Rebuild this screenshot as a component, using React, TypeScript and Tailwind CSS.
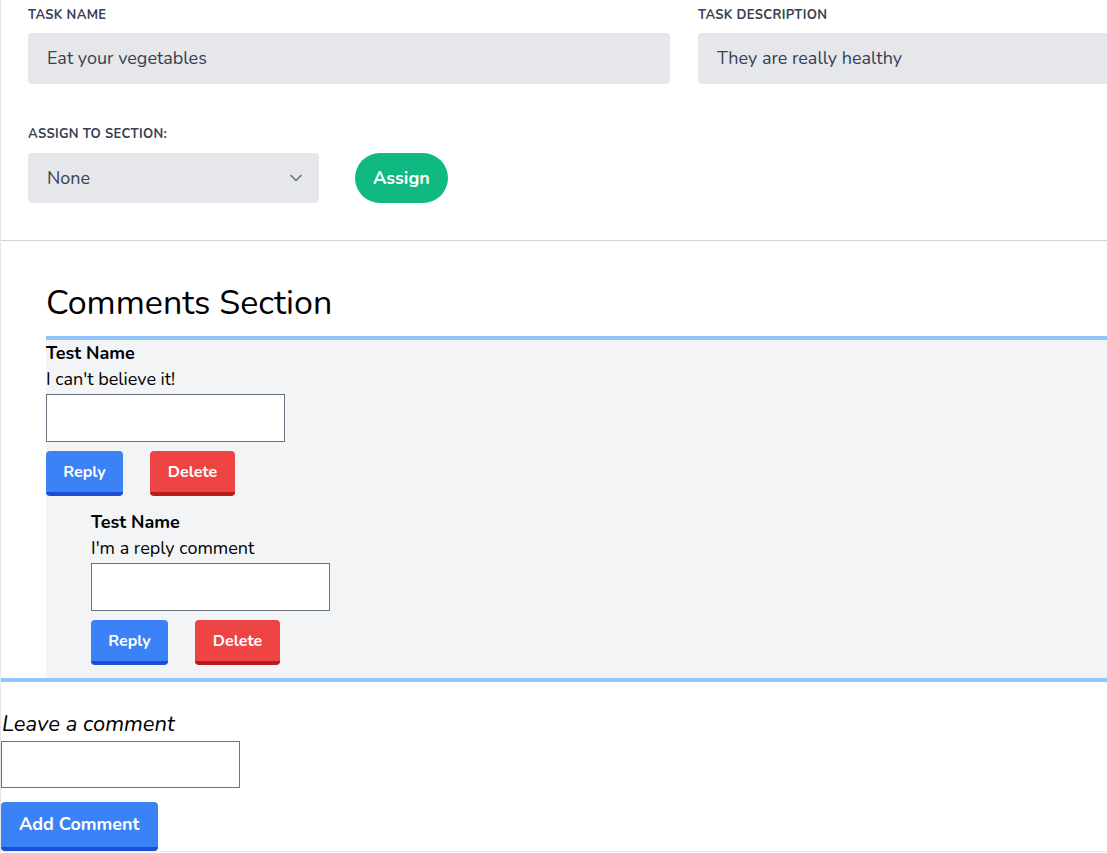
import { ChevronDown } from 'lucide-react';

const font = { fontFamily: '"Nunito", "Open Sans", "Noto Sans", sans-serif' };

type CommentProps = {
  name: string;
  text: string;
};

function Comment({ name, text }: CommentProps) {
  return (
    <div>
      <div className="font-bold text-black text-[18px] leading-[26px]">{name}</div>
      <div className="text-[18px] text-black leading-[26px]">{text}</div>
      <input className="mt-[2px] block w-[239px] h-[48px] border border-[#6b7280] bg-white" />
      <div className="mt-[9px] flex gap-[27px]">
        <button className="w-[77px] h-[45px] rounded bg-[#3b82f6] border-b-4 border-[#1d4ed8] text-white font-bold text-[16px]">
          Reply
        </button>
        <button className="w-[85px] h-[45px] rounded bg-[#ef4444] border-b-4 border-[#b91c1c] text-white font-bold text-[16px]">
          Delete
        </button>
      </div>
    </div>
  );
}

export default function App() {
  return (
    <div className="w-full overflow-hidden bg-white" style={font}>
      <div className="w-[1400px] border-l border-b border-[#e5e7eb]">
        {/* Task form */}
        <div className="px-[27px] pt-[7px] pb-[37px]">
          <div className="grid grid-cols-[642px_642px] gap-x-[28px]">
            <div>
              <label className="block text-[13px] font-bold uppercase tracking-wide text-[#374151] leading-4 mb-[10px]">
                Task Name
              </label>
              <div className="h-[51px] rounded bg-[#e5e7eb] px-[19px] flex items-center text-[18px] text-[#374151]">
                Eat your vegetables
              </div>
            </div>
            <div>
              <label className="block text-[13px] font-bold uppercase tracking-wide text-[#374151] leading-4 mb-[10px]">
                Task Description
              </label>
              <div className="h-[51px] rounded bg-[#e5e7eb] px-[19px] flex items-center text-[18px] text-[#374151]">
                They are really healthy
              </div>
            </div>
          </div>

          <label className="mt-[42px] block text-[13px] font-bold uppercase tracking-wide text-[#374151] leading-4 mb-[11px]">
            Assign to section:
          </label>
          <div className="flex items-center gap-[36px]">
            <div className="w-[291px] h-[50px] rounded bg-[#e5e7eb] pl-[19px] pr-[13px] flex items-center justify-between text-[18px] text-[#374151]">
              <span>None</span>
              <ChevronDown className="w-5 h-5 text-[#6b7280]" strokeWidth={2} />
            </div>
            <button className="h-[50px] px-[18px] rounded-full bg-[#10b981] text-white font-bold text-[18px]">
              Assign
            </button>
          </div>
        </div>

        <div className="border-t border-[#d1d5db]" />

        {/* Comments */}
        <div className="border-b-4 border-[#93c5fd]">
          <div className="pl-[45px] pt-[44px]">
            <h2 className="text-[34px] leading-[36px] text-black mb-[15px]">Comments Section</h2>
            <div className="border-t-4 border-[#93c5fd] bg-[#f3f4f6] pb-[13px]">
              <Comment name="Test Name" text="I can't believe it!" />
              <div className="pl-[45px] mt-[13px]">
                <Comment name="Test Name" text="I'm a reply comment" />
              </div>
            </div>
          </div>
        </div>

        {/* New comment */}
        <div className="pt-[28px]">
          <div className="italic text-[22px] leading-[28px] text-black pl-px">Leave a comment</div>
          <input className="mt-[3px] block w-[239px] h-[47px] border border-[#6b7280] bg-white" />
          <button className="mt-[14px] h-[49px] px-[18px] rounded bg-[#3b82f6] border-b-4 border-[#1d4ed8] text-white font-bold text-[18px]">
            Add Comment
          </button>
        </div>
      </div>
    </div>
  );
}
